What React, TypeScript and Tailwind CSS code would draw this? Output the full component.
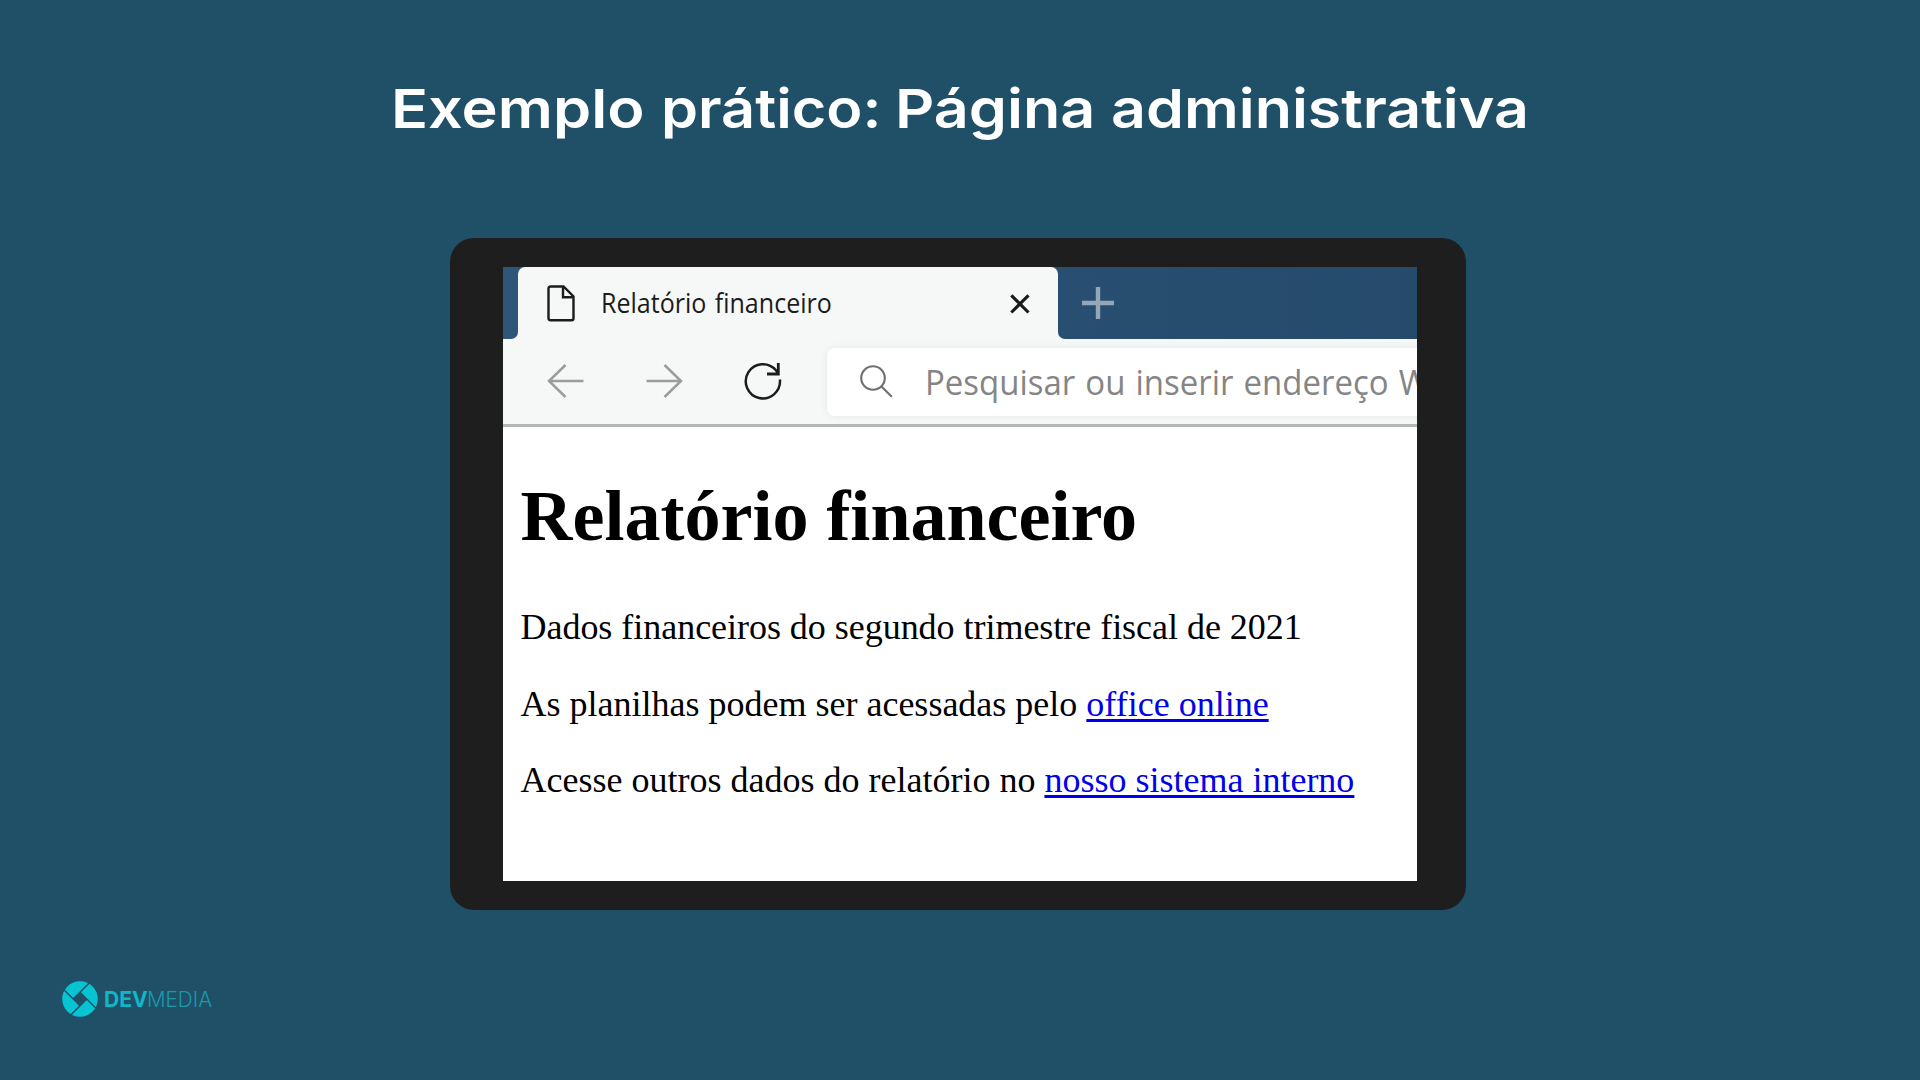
import React from 'react';

function FileIcon() {
  return (
    <svg width="28" height="37" viewBox="0 0 28 37" fill="none" stroke="#1c1c1c" strokeWidth="2.4" className="shrink-0">
      <path d="M3.5 1.5H16.5L26.5 11.5V33.2Q26.5 35.2 24.5 35.2H3.5Q1.5 35.2 1.5 33.2V3.5Q1.5 1.5 3.5 1.5Z" />
      <path d="M16 1.5V12.2H26.5" />
    </svg>
  );
}

function CloseIcon() {
  return (
    <svg width="20" height="20" viewBox="0 0 20 20" fill="none" stroke="#1a1a1a" strokeWidth="3.1">
      <path d="M1.3 1.3L18.5 18.5M18.5 1.3L1.3 18.5" />
    </svg>
  );
}

function PlusIcon() {
  return (
    <svg width="32" height="32" viewBox="0 0 32 32" fill="none" stroke="#94a7b8" strokeWidth="4.4">
      <path d="M16 0V32M0 16H32" />
    </svg>
  );
}

function ArrowIcon({ flip = false }: { flip?: boolean }) {
  return (
    <svg width="37" height="34" viewBox="0 0 37 34" fill="none" stroke="#9b9d9d" strokeWidth="2.5" className={flip ? '-scale-x-100' : ''}>
      <path d="M2 17H36.5M18.5 1L2 17L18.5 33" />
    </svg>
  );
}

function ReloadIcon() {
  return (
    <svg width="38" height="38" viewBox="0 0 38 38" fill="none" stroke="#1c1c1c" strokeWidth="2.5">
      <path d="M35.9 17.5A17.1 17.1 0 1 1 32 8.3L34 11.5" />
      <path d="M34.3 1V12H23" strokeWidth="2.8" />
    </svg>
  );
}

function SearchIcon() {
  return (
    <svg width="33" height="33" viewBox="0 0 33 33" fill="none" stroke="#6f6f6f" strokeWidth="2.1" className="shrink-0">
      <circle cx="13" cy="13" r="11.8" />
      <path d="M21.5 21.5L31.8 31.8" />
    </svg>
  );
}

function Logo() {
  return (
    <div className="flex h-9 items-center whitespace-nowrap font-['Inter',sans-serif] text-[21.5px] leading-9">
      <svg width="36" height="36" viewBox="0 0 36 36" className="mr-[6px] shrink-0">
        <circle cx="18" cy="18" r="17.8" fill="#07c4d3" />
        <path d="M18 11.2L24.8 18L18 24.8L11.2 18Z" fill="#205067" />
        <path d="M11.2 18L28.8 .4M18 11.2L35.6 28.8M24.8 18L7.2 35.6M18 24.8L.4 7.2" stroke="#205067" strokeWidth="1.5" />
      </svg>
      <span className="w-[43.5px] origin-left scale-x-[0.98] font-bold text-[#10b7c8]">DEV</span>
      <span className="origin-left scale-x-[0.96] font-light text-[#1a99aa]">MEDIA</span>
    </div>
  );
}

function BrowserWindow() {
  return (
    <div className="flex h-[614px] w-[914px] flex-col overflow-hidden bg-white">
      <div className="flex h-[72px] shrink-0 bg-[#f6f8f8]">
        <div className="flex bg-[#2f5579]">
          <div className="w-[15px] bg-[#f6f8f8]">
            <div className="h-full rounded-br-[7px] bg-[#2f5579]" />
          </div>
        </div>
        <div className="flex w-[540px] bg-[#284f70]">
          <div className="flex w-full items-center rounded-t-[7px] bg-[#f6f8f8] pl-[28.5px]">
            <FileIcon />
            <span className="-mt-[2px] ml-[26px] w-[409px] shrink-0 origin-left scale-x-[0.895] whitespace-nowrap font-['Open_Sans',sans-serif] text-[28px] leading-[36px] text-[#1b1b1b] [word-spacing:2px]">
              Relatório financeiro
            </span>
            <div className="mt-[2px] shrink-0">
              <CloseIcon />
            </div>
          </div>
        </div>
        <div className="flex flex-1 items-center rounded-bl-[7px] bg-linear-to-r from-[#284f71] to-[#254a6a] pl-[24px]">
          <PlusIcon />
        </div>
      </div>

      <div className="flex h-[88px] shrink-0 items-center border-b-[3px] border-[#b3b7b7] bg-[#f6f8f8]">
        <div className="flex w-[323.5px] shrink-0 items-center pl-[43.5px]">
          <div className="-mt-px">
            <ArrowIcon />
          </div>
          <div className="-mt-px ml-[62px]">
            <ArrowIcon flip />
          </div>
          <div className="-mt-px ml-[61.5px]">
            <ReloadIcon />
          </div>
        </div>
        <div className="flex h-[68px] w-[640px] shrink-0 items-center rounded-[8px] bg-white pl-[33px] shadow-[0_0_8px_rgba(0,0,0,0.07)]">
          <SearchIcon />
          <span className="ml-[32.5px] origin-left scale-x-[0.97] whitespace-nowrap font-['Open_Sans',sans-serif] text-[34px] leading-[44px] text-[#858585] [word-spacing:1.5px]">
            Pesquisar ou inserir endereço W
          </span>
        </div>
      </div>

      <main className="pl-[17.5px] font-['Liberation_Serif','Times_New_Roman',serif] text-[36px] leading-[40px] text-black">
        <h1 className="mt-[49px] whitespace-nowrap text-[72px] leading-[80px] font-bold">Relatório financeiro</h1>
        <p className="mt-[51px] whitespace-nowrap tracking-[-0.03px]">Dados financeiros do segundo trimestre fiscal de 2021</p>
        <p className="mt-[37px] whitespace-nowrap">
          As planilhas podem ser acessadas pelo{' '}
          <a className="text-[#0000ee] underline decoration-[2.5px] underline-offset-[3px] [text-decoration-skip-ink:none]">office online</a>
        </p>
        <p className="mt-[36px] whitespace-nowrap">
          Acesse outros dados do relatório no{' '}
          <a className="text-[#0000ee] underline decoration-[2.5px] underline-offset-[3px] [text-decoration-skip-ink:none]">nosso sistema interno</a>
        </p>
      </main>
    </div>
  );
}

export default function App() {
  return (
    <div className="flex h-[1080px] w-[1920px] flex-col overflow-hidden bg-[#205067]">
      <h1 className="mt-[73px] ml-[390.5px] flex h-[72px] whitespace-nowrap font-['Inter',sans-serif] text-[54px] leading-[72px] font-semibold text-white">
        <span className="w-[270px] origin-left scale-x-[1.134]">Exemplo</span>
        <span className="w-[234px] origin-left scale-x-[1.10]">prático:</span>
        <span className="w-[216.5px] origin-left scale-x-[1.13]">Página</span>
        <span className="w-[370.7px] origin-left scale-x-[1.127]">administrativa</span>
      </h1>
      <div className="mt-[93px] ml-[450px] h-[672px] w-[1016px] rounded-[24px] bg-[#1e1e1e] pt-[29px] pl-[53px]">
        <BrowserWindow />
      </div>
      <div className="mt-[71px] ml-[61.5px]">
        <Logo />
      </div>
    </div>
  );
}
